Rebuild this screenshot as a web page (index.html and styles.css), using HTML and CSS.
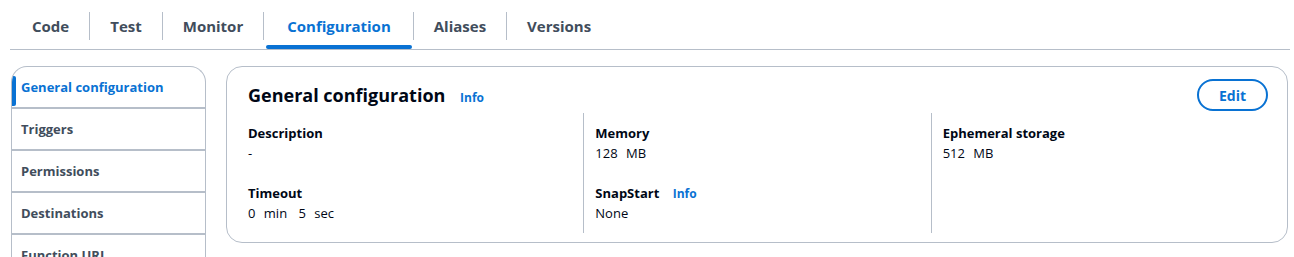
FILE: index.html
```html
<!DOCTYPE html>
<html lang="en">
<head>
    <meta charset="UTF-8">
    <meta name="viewport" content="width=device-width, initial-scale=1.0">
    <title>Function - Configuration</title>
    <link rel="stylesheet" href="styles.css">
</head>
<body>
    <div class="page">
        <div class="tabs">
            <div class="tab"><span class="tab-label">Code</span></div>
            <div class="tab"><span class="tab-label">Test</span></div>
            <div class="tab"><span class="tab-label">Monitor</span></div>
            <div class="tab active"><span class="tab-label">Configuration</span></div>
            <div class="tab"><span class="tab-label">Aliases</span></div>
            <div class="tab"><span class="tab-label">Versions</span></div>
        </div>

        <div class="layout">
            <ul class="side-nav">
                <li class="active">General configuration</li>
                <li>Triggers</li>
                <li>Permissions</li>
                <li>Destinations</li>
                <li>Function URL</li>
            </ul>

            <div class="panel">
                <div class="panel-header">
                    <h2>General configuration <a class="info" href="#">Info</a></h2>
                    <button class="edit-btn">Edit</button>
                </div>
                <div class="columns">
                    <div class="column">
                        <div class="field">
                            <div class="label">Description</div>
                            <div class="value">-</div>
                        </div>
                        <div class="field">
                            <div class="label">Timeout</div>
                            <div class="value">0 <span class="unit">min</span> <span class="unit wide">5</span> <span class="unit">sec</span></div>
                        </div>
                    </div>
                    <div class="column">
                        <div class="field">
                            <div class="label">Memory</div>
                            <div class="value">128 <span class="unit">MB</span></div>
                        </div>
                        <div class="field">
                            <div class="label">SnapStart <a class="info" href="#">Info</a></div>
                            <div class="value">None</div>
                        </div>
                    </div>
                    <div class="column">
                        <div class="field">
                            <div class="label">Ephemeral storage</div>
                            <div class="value">512 <span class="unit">MB</span></div>
                        </div>
                    </div>
                </div>
            </div>
        </div>
    </div>
</body>
</html>
```

FILE: styles.css
```css
body {
    margin: 0;
    font-family: "Open Sans", Roboto, Arial, sans-serif;
    color: #000716;
    background-color: #fff;
}
.page {
    padding: 0 4px 0 10px;
}

/* tabs */
.tabs {
    display: flex;
    padding-left: 2px;
    border-bottom: 1px solid #b6bec9;
}
.tab {
    position: relative;
    padding: 12px 0 9px;
}
.tab-label {
    display: block;
    padding: 0 20px;
    font-size: 15px;
    font-weight: 700;
    line-height: 28px;
    color: #414d5c;
}
.tab + .tab .tab-label {
    border-left: 1px solid #b6bec9;
}
.tab.active .tab-label {
    padding: 0 22px 0 23px;
    color: #0972d3;
}
.tab.active::after {
    content: "";
    position: absolute;
    left: 3px;
    right: 1px;
    bottom: 0;
    height: 4px;
    border-radius: 2px;
    background-color: #0972d3;
}

/* layout */
.layout {
    display: flex;
    align-items: flex-start;
    gap: 20px;
    margin-top: 16px;
    padding: 0 2px 0 1px;
}

/* side navigation */
.side-nav {
    list-style: none;
    margin: 0;
    padding: 0;
    width: 193px;
    flex-shrink: 0;
    border: 1px solid #b6bec9;
    border-bottom: none;
    border-radius: 16px 16px 0 0;
    overflow: hidden;
}
.side-nav li {
    position: relative;
    padding: 0 9px;
    line-height: 40px;
    font-size: 13px;
    font-weight: 700;
    color: #414d5c;
}
.side-nav li + li {
    border-top: 2px solid #b6bec9;
}
.side-nav li.active {
    color: #0972d3;
}
.side-nav li.active::before {
    content: "";
    position: absolute;
    left: 0;
    top: 9px;
    bottom: 1px;
    width: 4px;
    border-radius: 0 2px 2px 0;
    background-color: #0972d3;
}

/* panel */
.panel {
    flex: 1;
    border: 1px solid #b6bec9;
    border-radius: 16px;
    padding-bottom: 9px;
}
.panel-header {
    display: flex;
    align-items: center;
    justify-content: space-between;
    padding: 12px 19px 2px 21px;
}
.panel-header h2 {
    margin: 0;
    font-size: 18px;
    font-weight: 700;
    line-height: 32px;
}
.info {
    margin-left: 10px;
    font-size: 12px;
    font-weight: 700;
    line-height: 1;
    color: #0972d3;
    text-decoration: none;
}
.edit-btn {
    height: 32px;
    padding: 0 20px;
    border: 2px solid #0972d3;
    border-radius: 20px;
    background-color: #fff;
    font-family: inherit;
    font-size: 14px;
    font-weight: 700;
    color: #0972d3;
}

/* key-value columns */
.columns {
    display: grid;
    grid-template-columns: repeat(3, 1fr);
    margin: 0 9px;
}
.column {
    padding: 10px 12px;
}
.column + .column {
    border-left: 1px solid #b6bec9;
    padding-left: 11px;
}
.field + .field {
    margin-top: 20px;
}
.label {
    font-size: 13px;
    font-weight: 700;
    line-height: 20px;
}
.label .info {
    margin-left: 10px;
}
.value {
    font-size: 13px;
    line-height: 20px;
}
.unit {
    margin-left: 5px;
}
.unit.wide {
    margin-left: 8px;
}
```
